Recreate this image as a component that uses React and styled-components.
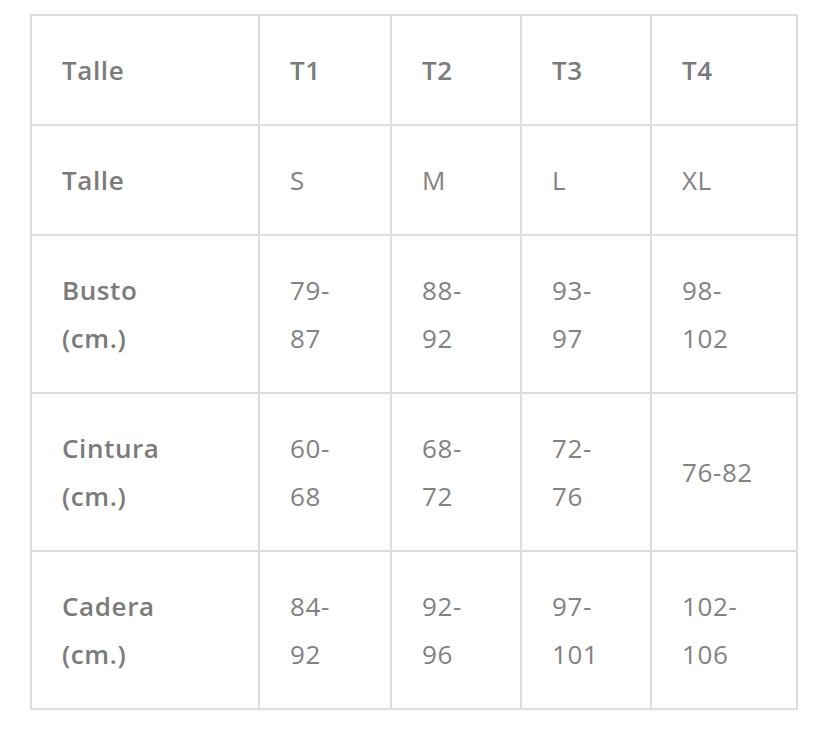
import React from "react"
import styled, { createGlobalStyle } from "styled-components"

const GlobalStyle = createGlobalStyle`
  body {
    margin: 0;
    background: #fff;
    font-family: "Open Sans", "Liberation Sans", sans-serif;
  }
`

const Wrapper = styled.div`
  padding: 14px 0 0 30px;
`

const SizeTable = styled.table`
  border-collapse: collapse;
  table-layout: fixed;
  width: 766px;
  color: #808080;
  font-size: 26px;
  line-height: 48px;
  letter-spacing: 0.6px;
`

const Cell = styled.td`
  border: 2px solid #dddddd;
  padding: 30px 29px 30px 30px;
  vertical-align: middle;
  text-align: left;
  white-space: pre-line;
  font-weight: ${({ $bold }) => ($bold ? 600 : 400)};
  color: ${({ $bold }) => ($bold ? "#7b7b7b" : "#828282")};
`

const widths = [228, 132, 130, 130, 146]

const rows = [
  { label: "Talle", bold: true, values: ["T1", "T2", "T3", "T4"] },
  { label: "Talle", values: ["S", "M", "L", "XL"] },
  { label: "Busto\n(cm.)", values: ["79-\n87", "88-\n92", "93-\n97", "98-\n102"] },
  { label: "Cintura\n(cm.)", values: ["60-\n68", "68-\n72", "72-\n76", "76-82"] },
  { label: "Cadera\n(cm.)", values: ["84-\n92", "92-\n96", "97-\n101", "102-\n106"] },
]

const App = () => (
  <Wrapper>
    <GlobalStyle />
    <SizeTable>
      <colgroup>
        {widths.map((w, i) => (
          <col key={i} style={{ width: w }} />
        ))}
      </colgroup>
      <tbody>
        {rows.map((row, i) => (
          <tr key={i}>
            <Cell $bold>{row.label}</Cell>
            {row.values.map((v, j) => (
              <Cell key={j} $bold={row.bold}>{v}</Cell>
            ))}
          </tr>
        ))}
      </tbody>
    </SizeTable>
  </Wrapper>
)

export default App
